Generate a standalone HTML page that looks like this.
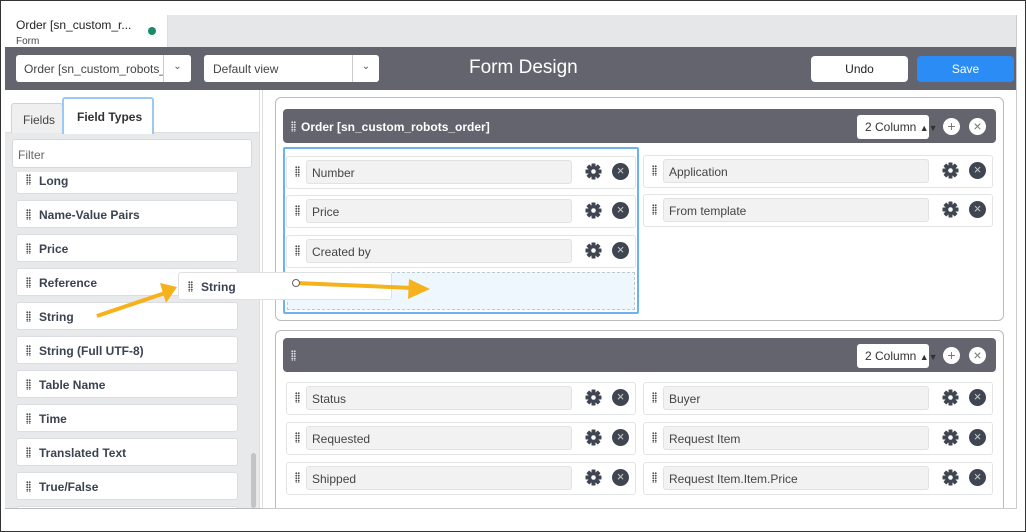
<!DOCTYPE html>
<html><head><meta charset="utf-8"><style>
*{box-sizing:border-box;margin:0;padding:0}
body{width:1026px;height:532px;position:relative;background:#fff;font-family:"Liberation Sans",sans-serif;overflow:hidden}
.a{position:absolute}
.item{position:absolute;left:16px;width:222px;height:28px;background:#fff;border:1px solid #dcdde0;border-radius:3px;font-weight:bold;font-size:12px;color:#3b4350;padding:7px 0 0 22px}
.grip{position:absolute;width:5px;height:11px;background-image:radial-gradient(circle,#555 0.9px,transparent 1.1px);background-size:2.5px 2.5px}
.item .grip{left:9px;top:8px}
.row{position:absolute;height:33px;background:#fff;border:1px solid #e3e4e6;border-radius:3px}
.row .grip{left:8px;top:9px}
.inp{position:absolute;left:19px;top:3px;height:24px;background:#f2f2f2;border:1px solid #e2e2e2;border-radius:3px;font-size:12px;color:#444;padding:5px 0 0 5px}
.g{position:absolute;top:6px;width:17px;height:17px}
.x{position:absolute;top:6px;width:17px;height:17px;border-radius:50%;background:#3f4652;color:#ccc;font-size:13px;line-height:16px;text-align:center}
.hdr{position:absolute;background:#64646e;border-radius:4px;color:#fff;font-weight:bold;font-size:12px}
.col{position:absolute;top:6px;width:72px;height:24px;background:#fff;border-radius:3px;color:#333;font-size:12px;font-weight:normal;padding:5px 0 0 8px;white-space:nowrap}
.ci{position:absolute;top:9px;width:17px;height:17px;border-radius:50%;background:#fff;color:#777;font-size:14px;line-height:16px;text-align:center;font-weight:normal}
</style></head><body>
<svg width="0" height="0" style="position:absolute"><defs><g id="gear"><circle cx="8.5" cy="8.5" r="5.5" fill="#3f4652"/><g fill="#3f4652"><rect x="6.5" y="0.5" width="4" height="16" rx="0.5"/><rect x="6.5" y="0.5" width="4" height="16" rx="0.5" transform="rotate(45 8.5 8.5)"/><rect x="6.5" y="0.5" width="4" height="16" rx="0.5" transform="rotate(90 8.5 8.5)"/><rect x="6.5" y="0.5" width="4" height="16" rx="0.5" transform="rotate(135 8.5 8.5)"/></g><circle cx="8.5" cy="8.5" r="2.3" fill="#fff"/></g></defs></svg>

<!-- tab bar -->
<div class="a" style="left:5px;top:15px;width:1012px;height:32px;background:#e6e7e9"></div>
<div class="a" style="left:5px;top:15px;width:163px;height:32px;background:#fff;border-right:1px solid #ddd;padding:3px 0 0 11px;font-size:12px;color:#222;line-height:15px">Order [sn_custom_r...<br><span style="font-size:10px;color:#444">Form</span></div>
<div class="a" style="left:148px;top:27px;width:8px;height:8px;border-radius:50%;background:#1a8a6a"></div>
<!-- toolbar -->
<div class="a" style="left:5px;top:47px;width:1012px;height:43px;background:#64646e"></div>
<div class="a" style="left:16px;top:55px;width:175px;height:27px;background:#fff;border-radius:3px;font-size:12px;color:#444;padding:7px 0 0 8px;overflow:hidden">Order [sn_custom_robots_<div class="a" style="left:147px;top:0;width:28px;height:27px;background:#fff;border-left:1px solid #ccc;text-align:center;font-size:10px;padding-top:6px;color:#555">&#8964;</div></div>
<div class="a" style="left:204px;top:55px;width:175px;height:27px;background:#fff;border-radius:3px;font-size:12px;color:#444;padding:7px 0 0 9px">Default view<div class="a" style="left:148px;top:0;width:27px;height:27px;border-left:1px solid #ccc;text-align:center;font-size:10px;padding-top:6px;color:#555">&#8964;</div></div>
<div class="a" style="left:469px;top:57px;font-size:19px;color:#fff">Form Design</div>
<div class="a" style="left:811px;top:56px;width:97px;height:26px;background:#fff;border-radius:4px;font-size:12px;color:#222;text-align:center;padding-top:6px">Undo</div>
<div class="a" style="left:917px;top:56px;width:97px;height:26px;background:#2a8cf4;border-radius:4px;font-size:12px;color:#fff;text-align:center;padding-top:6px">Save</div>
<!-- left panel -->
<div class="a" style="left:5px;top:90px;width:254px;height:418px;background:#e8e9eb"></div>
<div class="a" style="left:5px;top:90px;width:254px;height:43px;background:#fff;border-bottom:1px solid #ddd"></div>
<div class="a" style="left:11px;top:103px;width:52px;height:30px;background:#efefef;border:1px solid #d0d0d0;border-bottom:none;border-radius:3px 3px 0 0;font-size:12px;color:#444;padding:9px 0 0 11px">Fields</div>
<div class="a" style="left:62px;top:97px;width:92px;height:37px;background:#fff;border:2px solid #9dc8f3;border-bottom:none;border-radius:3px 3px 0 0;font-size:12px;font-weight:bold;color:#333;padding:11px 0 0 13px">Field Types</div>
<div class="a" style="left:12px;top:139px;width:240px;height:29px;background:#fff;border:1px solid #d8d8d8;border-radius:3px;font-size:12px;color:#666;padding:8px 0 0 5px">Filter</div>
<div class="a" style="left:5px;top:172px;width:248px;height:336px;overflow:hidden">
<div class="item" style="left:11px;top:-7px;height:29px;padding-top:8px"><i class="grip"></i>Long</div>
<div class="item" style="left:11px;top:28px"><i class="grip"></i>Name-Value Pairs</div>
<div class="item" style="left:11px;top:62px"><i class="grip"></i>Price</div>
<div class="item" style="left:11px;top:96px"><i class="grip"></i>Reference</div>
<div class="item" style="left:11px;top:130px"><i class="grip"></i>String</div>
<div class="item" style="left:11px;top:164px"><i class="grip"></i>String (Full UTF-8)</div>
<div class="item" style="left:11px;top:198px"><i class="grip"></i>Table Name</div>
<div class="item" style="left:11px;top:232px"><i class="grip"></i>Time</div>
<div class="item" style="left:11px;top:266px"><i class="grip"></i>Translated Text</div>
<div class="item" style="left:11px;top:300px"><i class="grip"></i>True/False</div>
<div class="item" style="left:11px;top:334px"></div>
</div>
<div class="a" style="left:251px;top:453px;width:5px;height:55px;background:#c4c4c4;border-radius:3px"></div>
<div class="a" style="left:259px;top:90px;width:1px;height:418px;background:#ddd"></div>
<div class="a" style="left:262px;top:90px;width:1px;height:418px;background:#ddd"></div>
<div class="a" style="left:262px;top:508px;width:755px;height:1px;background:#ccc"></div>
<div class="a" style="left:5px;top:508px;width:257px;height:1px;background:#bbb"></div>
<div class="a" style="left:1016px;top:15px;width:1px;height:494px;background:#ccc"></div>

<!-- section 1 -->
<div class="a" style="left:275px;top:97px;width:729px;height:224px;border:1px solid #bbb;border-radius:6px"></div>
<div class="hdr" style="left:283px;top:109px;width:713px;height:34px;padding:11px 0 0 18px"><i class="grip" style="left:8px;top:12px;background-image:radial-gradient(circle,#ddd 0.9px,transparent 1.1px)"></i>Order [sn_custom_robots_order]
<div class="col" style="left:574px">2 Column <span style="font-size:9px">&#9650;&#9660;</span></div><div class="ci" style="left:660px">+</div><div class="ci" style="left:686px">&#215;</div></div>
<div class="a" style="left:283px;top:147px;width:356px;height:167px;border:2px solid #6bb3f0;border-radius:2px"></div>
<div class="row" style="left:286px;top:156px;width:350px"><i class="grip"></i><div class="inp" style="width:266px">Number</div><svg class="g" style="left:298px"><use href="#gear"/></svg><div class="x" style="left:325px">&#215;</div></div>
<div class="row" style="left:286px;top:195px;width:350px"><i class="grip"></i><div class="inp" style="width:266px">Price</div><svg class="g" style="left:298px"><use href="#gear"/></svg><div class="x" style="left:325px">&#215;</div></div>
<div class="row" style="left:286px;top:235px;width:350px"><i class="grip"></i><div class="inp" style="width:266px">Created by</div><svg class="g" style="left:298px"><use href="#gear"/></svg><div class="x" style="left:325px">&#215;</div></div>
<div class="a" style="left:287px;top:272px;width:348px;height:38px;background:#eff7fe;border:1px dashed #c0c8d0"></div>
<div class="row" style="left:643px;top:155px;width:350px"><i class="grip"></i><div class="inp" style="width:266px">Application</div><svg class="g" style="left:298px"><use href="#gear"/></svg><div class="x" style="left:325px">&#215;</div></div>
<div class="row" style="left:643px;top:194px;width:350px"><i class="grip"></i><div class="inp" style="width:266px">From template</div><svg class="g" style="left:298px"><use href="#gear"/></svg><div class="x" style="left:325px">&#215;</div></div>

<!-- section 2 -->
<div class="a" style="left:275px;top:330px;width:729px;height:178px;border:1px solid #bbb;border-bottom:none;border-radius:6px 6px 0 0"></div>
<div class="hdr" style="left:283px;top:338px;width:713px;height:34px"><i class="grip" style="left:8px;top:12px;background-image:radial-gradient(circle,#ddd 0.9px,transparent 1.1px)"></i>
<div class="col" style="left:574px">2 Column <span style="font-size:9px">&#9650;&#9660;</span></div><div class="ci" style="left:660px">+</div><div class="ci" style="left:686px">&#215;</div></div>
<div class="row" style="left:286px;top:382px;width:350px"><i class="grip"></i><div class="inp" style="width:266px">Status</div><svg class="g" style="left:298px"><use href="#gear"/></svg><div class="x" style="left:325px">&#215;</div></div>
<div class="row" style="left:286px;top:422px;width:350px"><i class="grip"></i><div class="inp" style="width:266px">Requested</div><svg class="g" style="left:298px"><use href="#gear"/></svg><div class="x" style="left:325px">&#215;</div></div>
<div class="row" style="left:286px;top:462px;width:350px"><i class="grip"></i><div class="inp" style="width:266px">Shipped</div><svg class="g" style="left:298px"><use href="#gear"/></svg><div class="x" style="left:325px">&#215;</div></div>
<div class="row" style="left:643px;top:382px;width:350px"><i class="grip"></i><div class="inp" style="width:266px">Buyer</div><svg class="g" style="left:298px"><use href="#gear"/></svg><div class="x" style="left:325px">&#215;</div></div>
<div class="row" style="left:643px;top:422px;width:350px"><i class="grip"></i><div class="inp" style="width:266px">Request Item</div><svg class="g" style="left:298px"><use href="#gear"/></svg><div class="x" style="left:325px">&#215;</div></div>
<div class="row" style="left:643px;top:462px;width:350px"><i class="grip"></i><div class="inp" style="width:266px">Request Item.Item.Price</div><svg class="g" style="left:298px"><use href="#gear"/></svg><div class="x" style="left:325px">&#215;</div></div>

<!-- dragged item -->
<div class="item" style="left:178px;top:272px;width:214px;height:28px;border-color:#e0e0e0"><i class="grip"></i>String</div>
<!-- arrows -->
<svg class="a" style="left:0;top:0" width="1026" height="532">
<g fill="#f5b21c" stroke="#f5b21c">
<line x1="97" y1="316" x2="165" y2="293" stroke-width="4"/>
<polygon points="177,287 160,283 166,303" stroke="none"/>
<line x1="296" y1="283" x2="413" y2="288" stroke-width="4"/>
<polygon points="430,289 409,279 408,299" stroke="none"/>
</g>
<circle cx="296" cy="283" r="3.5" fill="#fff" stroke="#666" stroke-width="1"/>
</svg>
<div class="a" style="left:0;top:0;width:1026px;height:532px;border:1px solid #333"></div>
</body></html>
